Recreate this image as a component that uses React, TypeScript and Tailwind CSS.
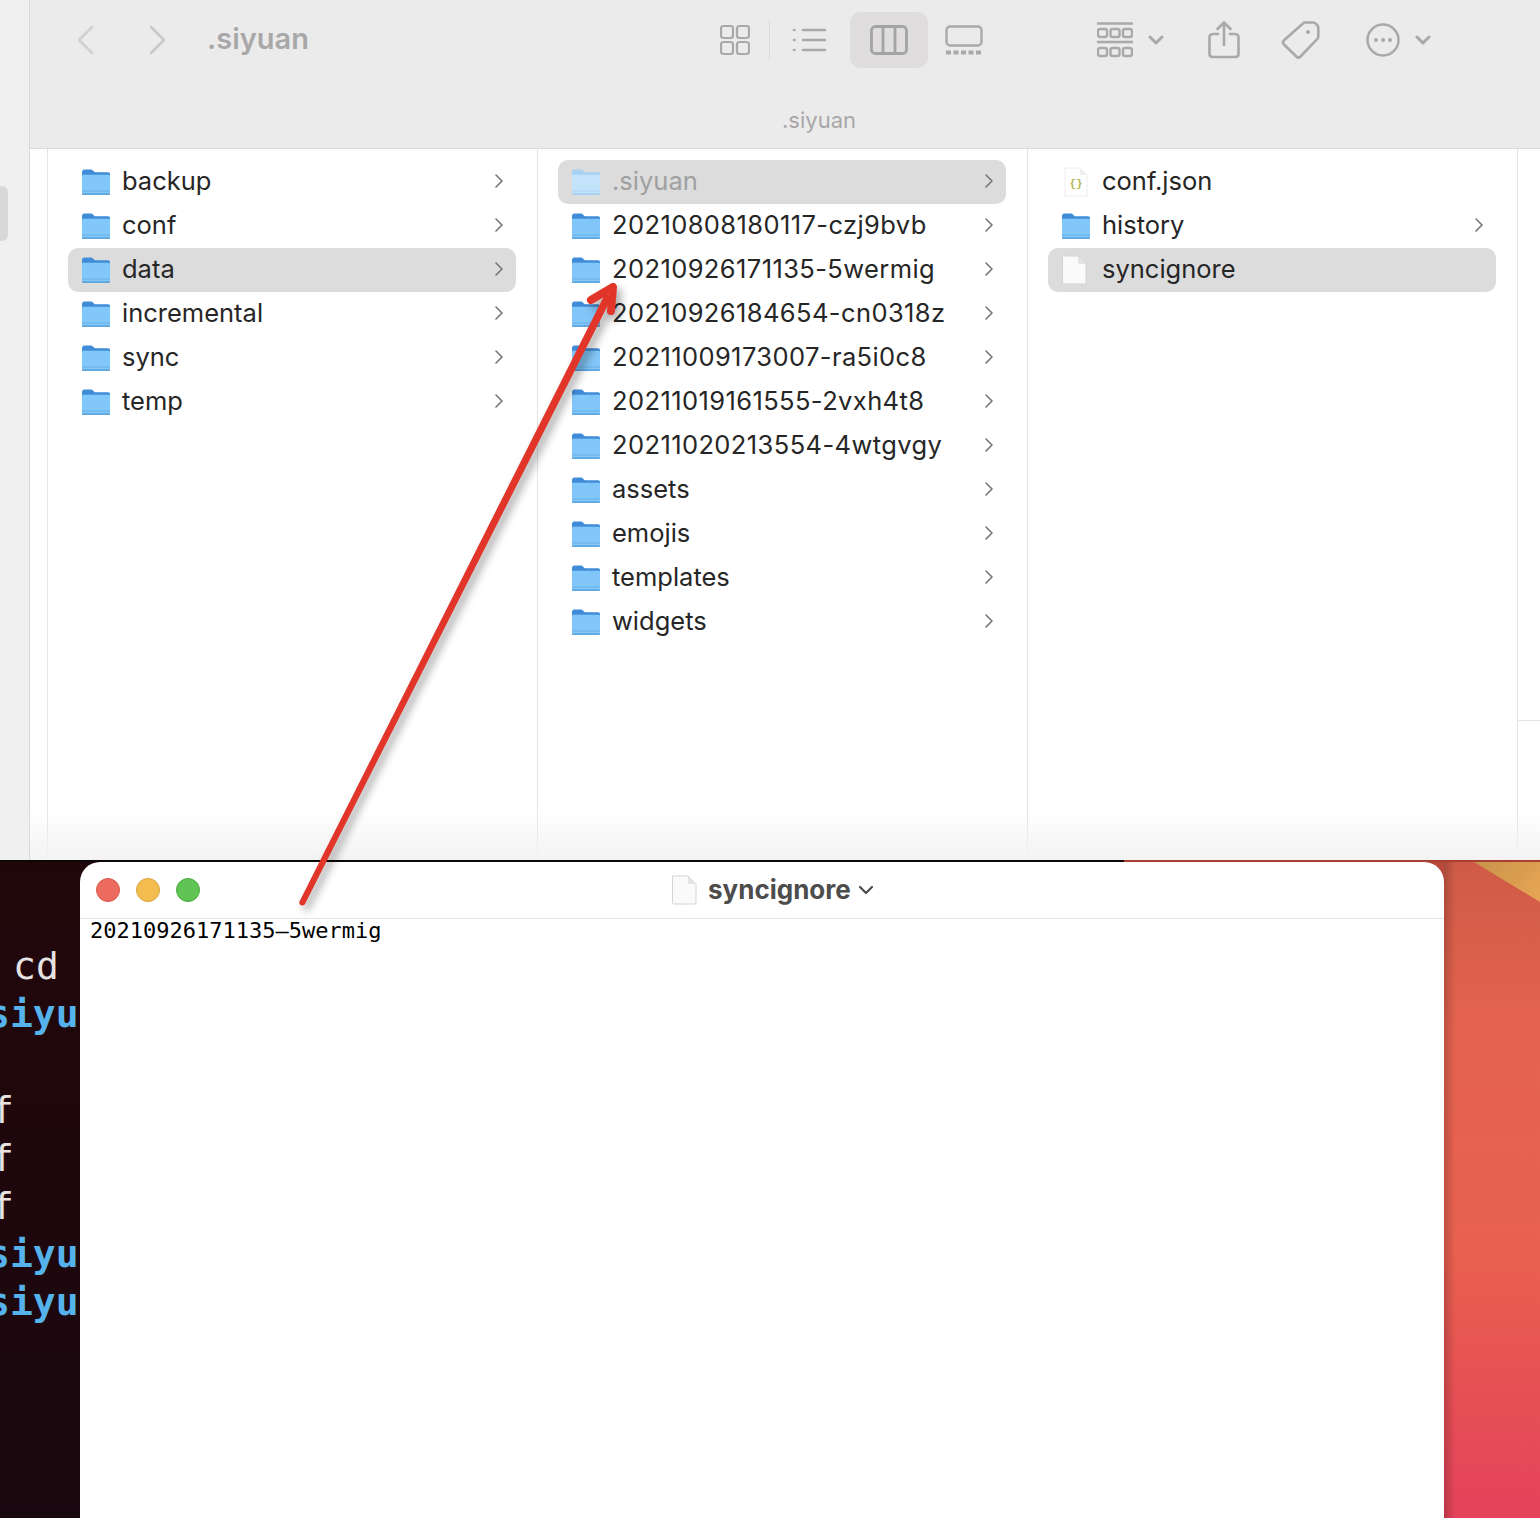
const col1 = ["backup", "conf", "data", "incremental", "sync", "temp"];
const col2 = [
  ".siyuan",
  "20210808180117-czj9bvb",
  "20210926171135-5wermig",
  "20210926184654-cn0318z",
  "20211009173007-ra5i0c8",
  "20211019161555-2vxh4t8",
  "20211020213554-4wtgvgy",
  "assets",
  "emojis",
  "templates",
  "widgets",
];

function FolderIcon({ faded = false }: { faded?: boolean }) {
  const tab = faded ? "#a8d2f3" : "#3f8cd8";
  const body = faded ? "#c3e3fb" : "#82c7f9";
  const strip = faded ? "#aed6f5" : "#68b0ea";
  const foot = faded ? "#a5cff0" : "#5fa5de";
  return (
    <svg width="30" height="28" viewBox="0 0 30 28" className="shrink-0">
      <path d="M1 4.500C1 2.600 1.800 1.500 3.500 1.500h6.200c1.400 0 2 .6 2.800 1.600.7.9 1.200 1.200 2.300 1.200h12.400c1.200 0 1.800.8 1.800 2v4H1z" fill={tab} />
      <path d="M1 8c0-.9.6-1.300 1.400-1.300h25.200c.8 0 1.400.4 1.400 1.300v17.200c0 1.200-.7 1.800-1.800 1.800H2.800C1.700 27 1 26.400 1 25.200z" fill={body} />
      <rect x="1" y="22.500" width="28" height="1" fill={strip} />
      <path d="M1 25.300h28v.1c0 1-.7 1.600-1.800 1.600H2.800C1.700 27 1 26.400 1 25.400z" fill={foot} />
    </svg>
  );
}

function FileIcon() {
  return (
    <svg width="26" height="30" viewBox="0 0 26 30" className="shrink-0">
      <path d="M1.500 1h15.500l8 8v18.500c0 .9-.6 1.500-1.500 1.500H3c-.9 0-1.500-.6-1.500-1.500z" fill="#fafafa" stroke="#d4d4d4" strokeWidth="1" />
      <path d="M17 1v6.500c0 .9.6 1.500 1.500 1.500H25z" fill="#e4e4e4" />
    </svg>
  );
}

function JsonIcon() {
  return (
    <svg width="30" height="30" viewBox="0 0 30 30" className="shrink-0">
      <path d="M4 1h15l7 7v21H4z" fill="#ffffff" stroke="#eeeeee" strokeWidth="1" />
      <path d="M19 1v7h7z" fill="#efefef" />
      <text x="15" y="20" textAnchor="middle" fontSize="11" fontWeight="700" fontFamily="Liberation Mono, monospace" fill="#b4bb55">
        {"{}"}
      </text>
    </svg>
  );
}

function Row({ label, icon, selected, muted, arrow = true }: { label: string; icon: React.ReactNode; selected?: boolean; muted?: boolean; arrow?: boolean }) {
  // the dated folder names run a bit wider than Inter's digits
  const wide = /^\d/.test(label);
  return (
    <div className={`flex h-[44px] items-center rounded-[10px] pl-[13px] pr-[12px] ${selected ? "bg-[#dcdcdc]" : ""}`}>
      <div className="flex w-[41px] items-center">{icon}</div>
      <span className={`flex-1 whitespace-nowrap pb-[2px] text-[25.500px] ${wide ? "tracking-[0.4px]" : ""} ${muted ? "text-[#a0a0a0]" : "text-[#262626]"}`}>{label}</span>
      {arrow && (
        <svg width="10" height="16" viewBox="0 0 10 16" fill="none" stroke="#767676" strokeWidth="1.600" strokeLinecap="round" strokeLinejoin="round" className="-mt-[2px]">
          <path d="M2 2l6 6-6 6" />
        </svg>
      )}
    </div>
  );
}

function Column({ children }: { children: React.ReactNode }) {
  return <div className="w-[490px] border-r border-[#e4e4e4] pl-[20px] pr-[21px] pt-[11px]">{children}</div>;
}

function Toolbar() {
  return (
    <div className="h-[149px] border-b border-[#dcdbdb] bg-[#ecebec]">
      <div className="flex h-[80px] items-center">
        <svg width="18" height="30" viewBox="0 0 18 30" fill="none" stroke="#d2d1d1" strokeWidth="2.600" strokeLinecap="round" strokeLinejoin="round" className="ml-[46px]">
          <path d="M16 2L3 15l13 13" />
        </svg>
        <svg width="18" height="30" viewBox="0 0 18 30" fill="none" stroke="#c8c7c7" strokeWidth="2.600" strokeLinecap="round" strokeLinejoin="round" className="ml-[55px]">
          <path d="M2 2l13 13L2 28" />
        </svg>
        <span className="ml-[40px] w-[513px] pb-[2px] text-[29px] font-semibold text-[#a9a8a8]">.siyuan</span>
        <svg width="30" height="30" viewBox="0 0 30 30" fill="none" stroke="#a9a9a9" strokeWidth="2.200">
          <rect x="1" y="1" width="12" height="12" rx="2.500" />
          <rect x="17" y="1" width="12" height="12" rx="2.500" />
          <rect x="1" y="17" width="12" height="12" rx="2.500" />
          <rect x="17" y="17" width="12" height="12" rx="2.500" />
        </svg>
        <div className="ml-[19px] h-[40px] w-px bg-[#dcdbdb]" />
        <svg width="34" height="26" viewBox="0 0 34 26" fill="none" stroke="#a9a9a9" strokeWidth="2.600" strokeLinecap="round" className="ml-[22px]">
          <path d="M11 3h22M11 13h22M11 23h22M2 3h.5M2 13h.5M2 23h.5" />
        </svg>
        <div className="ml-[24px] flex h-[56px] w-[78px] items-center justify-center rounded-[10px] bg-[#dfdddd]">
          <svg width="38" height="30" viewBox="0 0 38 30" fill="none" stroke="#a4a4a4" strokeWidth="2.800">
            <rect x="1.500" y="1.500" width="35" height="27" rx="4" />
            <path d="M13 1.500v27M25 1.500v27" />
          </svg>
        </div>
        <svg width="38" height="30" viewBox="0 0 38 30" fill="none" stroke="#a9a9a9" strokeWidth="2.400" className="ml-[17px]">
          <rect x="1.500" y="1.500" width="35" height="19" rx="3.500" />
          <path d="M1 27.500h36" strokeWidth="4" strokeDasharray="5 2.500" />
        </svg>
        <svg width="36" height="36" viewBox="0 0 36 36" fill="none" stroke="#a9a9a9" strokeWidth="2.400" className="ml-[114px]">
          <path d="M0 1.500h36M0 20h36" strokeWidth="2.600" />
          <rect x="1" y="7" width="9" height="8" rx="2" />
          <rect x="13.500" y="7" width="9" height="8" rx="2" />
          <rect x="26" y="7" width="9" height="8" rx="2" />
          <rect x="1" y="26" width="9" height="8" rx="2" />
          <rect x="13.500" y="26" width="9" height="8" rx="2" />
          <rect x="26" y="26" width="9" height="8" rx="2" />
        </svg>
        <svg width="16" height="10" viewBox="0 0 16 10" fill="none" stroke="#a9a9a9" strokeWidth="3" strokeLinecap="round" strokeLinejoin="round" className="ml-[15px]">
          <path d="M2 2l6 6 6-6" />
        </svg>
        <svg width="32" height="38" viewBox="0 0 32 38" fill="none" stroke="#a9a9a9" strokeWidth="2.600" strokeLinecap="round" strokeLinejoin="round" className="ml-[44px]">
          <path d="M10 13H5c-2 0-3.500 1-3.500 3v17c0 2 1.500 3 3.500 3h22c2 0 3.500-1 3.500-3V16c0-2-1.500-3-3.500-3h-5M16 24V2M9.500 8L16 1.500 22.500 8" />
        </svg>
        <svg width="40" height="38" viewBox="0 0 40 38" fill="none" stroke="#a9a9a9" strokeWidth="2.600" strokeLinejoin="round" className="ml-[41px]">
          <path d="M22 2.500c.6-.6 1.200-1 2-1h8c1.100 0 2 .4 2.800 1.200l1.300 1.300c.8.8 1.200 1.700 1.200 2.800v9c0 .8-.3 1.500-.9 2.100L19.500 35.500c-1.200 1.200-3 1.200-4.200 0L3 23.500c-1.200-1.200-1.200-3 0-4.200z" />
          <circle cx="27" cy="11" r="2" fill="#a9a9a9" stroke="none" />
        </svg>
        <svg width="34" height="34" viewBox="0 0 34 34" fill="none" stroke="#a9a9a9" strokeWidth="2.500" className="ml-[45px]">
          <circle cx="17" cy="17" r="15.500" />
          <circle cx="10" cy="17" r="2" fill="#a9a9a9" stroke="none" />
          <circle cx="17" cy="17" r="2" fill="#a9a9a9" stroke="none" />
          <circle cx="24" cy="17" r="2" fill="#a9a9a9" stroke="none" />
        </svg>
        <svg width="16" height="10" viewBox="0 0 16 10" fill="none" stroke="#a9a9a9" strokeWidth="3" strokeLinecap="round" strokeLinejoin="round" className="ml-[15px]">
          <path d="M2 2l6 6 6-6" />
        </svg>
      </div>
      <div className="pl-[752px] pt-[25px] text-[22px] leading-[30px] text-[#a8a7a7]">.siyuan</div>
    </div>
  );
}

function Finder() {
  return (
    <div className="relative flex h-[860px] bg-white">
      <div className="w-[30px] shrink-0 border-r border-[#d9d9d9] bg-[#f1f0f0] pt-[186px]">
        <div className="h-[55px] w-[8px] rounded-r-[6px] bg-[#d9d8d8]" />
      </div>
      <div className="flex min-w-0 flex-1 flex-col">
        <Toolbar />
        <div className="flex flex-1">
          <div className="w-[18px] shrink-0 border-r border-[#e4e4e4]" />
          <Column>
            {col1.map((name) => (
              <Row key={name} label={name} icon={<FolderIcon />} selected={name === "data"} />
            ))}
          </Column>
          <Column>
            {col2.map((name, i) => (
              <Row key={name} label={name} icon={<FolderIcon faded={i === 0} />} selected={i === 0} muted={i === 0} />
            ))}
          </Column>
          <Column>
            <Row label="conf.json" icon={<JsonIcon />} arrow={false} />
            <Row label="history" icon={<FolderIcon />} />
            <Row label="syncignore" icon={<FileIcon />} selected arrow={false} />
          </Column>
          <div className="flex-1 pt-[571px]">
            <div className="h-px bg-[#e4e4e4]" />
          </div>
        </div>
      </div>
      <div className="pointer-events-none absolute bottom-0 left-[30px] right-0 h-[50px] bg-gradient-to-b from-transparent to-[#f3f3f3]" />
    </div>
  );
}

function Terminal() {
  const lines: { text: string; blue?: boolean; ml: string }[] = [
    { text: "cd", ml: "ml-[13px]" },
    { text: "siyu", blue: true, ml: "-ml-[13px]" },
    { text: " ", ml: "ml-0" },
    { text: "f", ml: "-ml-[9px]" },
    { text: "f", ml: "-ml-[9px]" },
    { text: "f", ml: "-ml-[9px]" },
    { text: "siyu", blue: true, ml: "-ml-[13px]" },
    { text: "siyu", blue: true, ml: "-ml-[13px]" },
  ];
  return (
    <div className="w-[80px] shrink-0 overflow-hidden bg-[linear-gradient(180deg,#22070a,#1a0810)] pt-[80px] font-['DejaVu_Sans_Mono',monospace] text-[38px] leading-[48px]">
      {lines.map((l, i) => (
        <div key={i} className={`h-[48px] whitespace-pre ${l.ml} ${l.blue ? "font-bold text-[#55b2ea]" : "text-[#e6e3e3]"}`}>
          {l.text}
        </div>
      ))}
    </div>
  );
}

function Editor() {
  return (
    <div className="w-[1364px] shrink-0 bg-[linear-gradient(90deg,#1f060a_50%,#b9473a_50%)]">
      <div className="h-full rounded-t-[20px] bg-white">
        <div className="flex h-[57px] items-center border-b border-[#e3e3e3]">
          <div className="ml-[16px] h-[24px] w-[24px] rounded-full border border-[#d9574c] bg-[#ec6a5e]" />
          <div className="ml-[16px] h-[24px] w-[24px] rounded-full border border-[#dca23c] bg-[#f4bd4f]" />
          <div className="ml-[16px] h-[24px] w-[24px] rounded-full border border-[#4ea843] bg-[#5fc454]" />
          <div className="ml-[471px]">
            <FileIcon />
          </div>
          <span className="ml-[11px] pb-[2px] text-[26px] font-bold text-[#4d4d4d]">syncignore</span>
          <svg width="16" height="10" viewBox="0 0 16 10" fill="none" stroke="#4d4d4d" strokeWidth="2.200" strokeLinecap="round" strokeLinejoin="round" className="ml-[7px]">
            <path d="M2 2l6 6 6-6" />
          </svg>
        </div>
        <div className="pl-[10px] font-['DejaVu_Sans_Mono',monospace] text-[22px] leading-[24px] text-black">20210926171135–5wermig</div>
      </div>
    </div>
  );
}

function Wallpaper() {
  return (
    <div className="relative flex-1 overflow-hidden bg-[linear-gradient(180deg,#cf5b47_0%,#e4634e_25%,#e9604f_60%,#e4425a_100%)]">
      <div className="absolute inset-0 bg-gradient-to-r from-[#00000030] to-transparent to-[12%]" />
      <div className="absolute right-0 top-0 h-[40px] w-[66px] bg-[linear-gradient(135deg,#c8934a,#e8a655)] [clip-path:polygon(0_0,100%_0,100%_100%)]" />
    </div>
  );
}

function Arrow() {
  return (
    <svg width="1540" height="1518" viewBox="0 0 1540 1518" fill="none" className="pointer-events-none absolute left-0 top-0 drop-shadow-[4px_5px_4px_rgba(0,0,0,0.35)]">
      <path d="M299.500 901.500L605 294 612 297 305 904C303 907 298 905 299.500 901.500z" fill="#e2352a" />
      <path d="M591 300L613 287 611 311" stroke="#e2352a" strokeWidth="8" strokeLinecap="round" strokeLinejoin="round" />
    </svg>
  );
}

export default function App() {
  return (
    <div className="relative h-[1518px] w-[1540px] overflow-hidden bg-white font-['Inter',sans-serif]">
      <Finder />
      <div className="flex h-[2px]">
        <div className="w-[1124px] bg-[#0d0708]" />
        <div className="flex-1 bg-[#a83f30]" />
      </div>
      <div className="flex h-[656px]">
        <Terminal />
        <Editor />
        <Wallpaper />
      </div>
      <Arrow />
    </div>
  );
}
